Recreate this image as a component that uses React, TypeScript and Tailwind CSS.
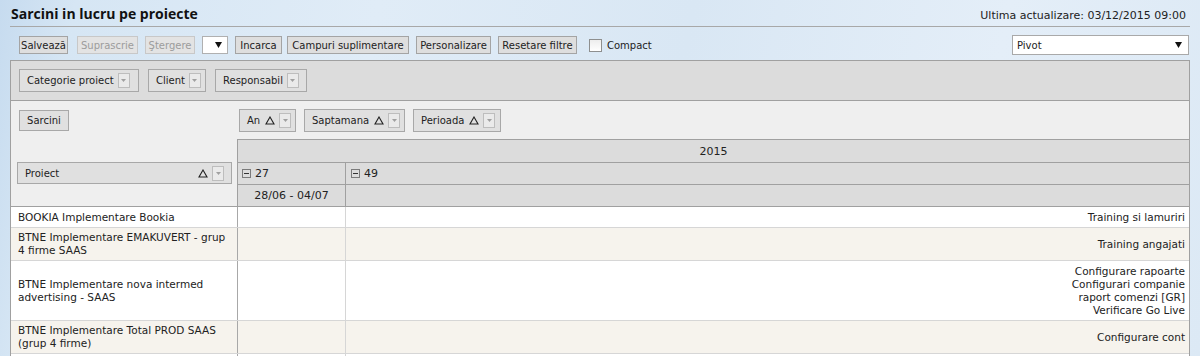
import React from "react";

const DD = () => (
  <span className="flex h-[15px] w-[12px] shrink-0 items-center justify-center border border-[#bdbdbd] bg-[#eaeaea]">
    <svg width="5" height="3" viewBox="0 0 5 3">
      <path d="M0 0h5L2.5 3z" fill="#a0a0a0" />
    </svg>
  </span>
);

const Tri = () => (
  <svg width="10" height="9" viewBox="0 0 10 9" className="shrink-0">
    <path d="M5 1 L9 8 H1 Z" fill="none" stroke="#222" strokeWidth="1.1" />
  </svg>
);

const MinusBox = () => (
  <svg width="9" height="9" viewBox="0 0 9 9" className="shrink-0">
    <rect x="0.5" y="0.5" width="8" height="8" fill="none" stroke="#7a7a7a" />
    <path d="M2 4.5h5" stroke="#333" />
  </svg>
);

function Field({ label, w, sort }: { label: string; w: number; sort?: boolean }) {
  return (
    <div
      className="flex h-[23px] items-center border border-[#a8a8a8] bg-[#e0e0e0] pl-[7px] pr-[4px]"
      style={{ width: w }}
    >
      <span className="whitespace-nowrap">{label}</span>
      {sort && (
        <span className="ml-[5px] flex">
          <Tri />
        </span>
      )}
      <span className="ml-[4px] flex">
        <DD />
      </span>
    </div>
  );
}

function Btn({ label, w, disabled, ml }: { label: string; w: number; disabled?: boolean; ml: string }) {
  return (
    <div
      className={
        "flex h-[18px] items-center justify-center whitespace-nowrap border " +
        (disabled
          ? "border-[#c8c8c8] bg-[#e3e3e3] text-[#9c9c9c] "
          : "border-[#a4a4a4] bg-[#dedede] text-[#222] ") +
        ml
      }
      style={{ width: w }}
    >
      {label}
    </div>
  );
}

const rows = [
  { h: 21, bg: "bg-white", left: ["BOOKIA Implementare Bookia"], right: ["Training si lamuriri"] },
  {
    h: 33,
    bg: "bg-[#f6f3ed]",
    left: ["BTNE Implementare EMAKUVERT - grup", "4 firme SAAS"],
    right: ["Training angajati"],
  },
  {
    h: 60,
    bg: "bg-white",
    left: ["BTNE Implementare nova intermed", "advertising - SAAS"],
    right: ["Configurare rapoarte", "Configurari companie", "raport comenzi [GR]", "Verificare Go Live"],
  },
  {
    h: 33,
    bg: "bg-[#f6f3ed]",
    left: ["BTNE Implementare Total PROD SAAS", "(grup 4 firme)"],
    right: ["Configurare cont"],
  },
  { h: 30, bg: "bg-white", left: [""], right: [""] },
];

export default function App() {
  return (
    <div className="relative h-[356px] w-[1200px] overflow-hidden bg-[linear-gradient(100deg,#c6dbef_0%,#d6e6f4_6%,#e0ecf7_30%,#d9e7f4_55%,#e4eef8_80%,#dce9f5_100%)] font-['DejaVu_Sans',sans-serif] text-[10px] leading-[13px] text-[#222]">
      {/* header */}
      <div className="flex h-[26px] items-end justify-between px-[11px] pb-[5px]">
        <div className="font-['Open_Sans',sans-serif] text-[14px] font-bold leading-none text-[#111]">
          Sarcini in lucru pe proiecte
        </div>
        <div className="pr-[3px] text-[11px] leading-none text-[#222]">Ultima actualizare: 03/12/2015 09:00</div>
      </div>
      <div className="mx-[10px] h-px bg-[#a8a8a8]" />

      {/* toolbar */}
      <div className="mt-[8px] flex h-[20px] items-center pl-[19px] pr-[11px]">
        <Btn label="Salvează" w={49} ml="" />
        <Btn label="Suprascrie" w={61} disabled ml="ml-[9px]" />
        <Btn label="Ştergere" w={50} disabled ml="ml-[7px]" />
        <div className="ml-[7px] flex h-[18px] w-[26px] items-center justify-end border border-[#b0b0b0] bg-white pr-[5px]">
          <svg width="7" height="6" viewBox="0 0 7 6">
            <path d="M0 0h7L3.5 6z" fill="#111" />
          </svg>
        </div>
        <Btn label="Incarca" w={47} ml="ml-[7px]" />
        <Btn label="Campuri suplimentare" w={122} ml="ml-[5px]" />
        <Btn label="Personalizare" w={75} ml="ml-[7px]" />
        <Btn label="Resetare filtre" w={79} ml="ml-[7px]" />
        <div className="ml-[12px] h-[13px] w-[13px] border border-[#8e8f8f] bg-[linear-gradient(#ededed,#ffffff)]" />
        <span className="ml-[5px]">Compact</span>
        <div className="ml-auto flex h-[20px] w-[177px] items-center justify-between border border-[#a9a9a9] bg-white pl-[4px] pr-[6px]">
          <span>Pivot</span>
          <svg width="7" height="6" viewBox="0 0 7 6">
            <path d="M0 0h7L3.5 6z" fill="#111" />
          </svg>
        </div>
      </div>

      {/* panel */}
      <div className="mx-[10px] mt-[5px] border border-[#a0a0a0] bg-[#efefef]">
        {/* filter area */}
        <div className="flex h-[40px] items-center gap-[9px] border-b border-[#a0a0a0] bg-[#dcdcdc] pl-[8px]">
          <Field label="Categorie proiect" w={120} />
          <Field label="Client" w={58} />
          <Field label="Responsabil" w={92} />
        </div>

        {/* header area */}
        <div className="grid grid-cols-[226px_1fr]">
          <div className="h-[38px] pl-[8px] pt-[9px]">
            <div className="flex h-[21px] w-[50px] items-center justify-center border border-[#a8a8a8] bg-[#e0e0e0]">
              Sarcini
            </div>
          </div>
          <div className="flex h-[38px] gap-[8px] pl-[2px] pt-[8px]">
            <Field label="An" w={57} sort />
            <Field label="Saptamana" w={101} sort />
            <Field label="Perioada" w={88} sort />
          </div>

          <div className="pl-[6px] pt-[23px]">
            <div className="flex h-[22px] w-[215px] items-center justify-between border border-[#a8a8a8] bg-[#e0e0e0] pl-[7px] pr-[7px]">
              <span>Proiect</span>
              <span className="flex items-center gap-[4px]">
                <Tri />
                <DD />
              </span>
            </div>
          </div>
          <div className="border-l border-t border-[#a0a0a0] bg-[#dcdcdc] text-[11px]">
            <div className="flex h-[23px] items-center justify-center border-b border-[#a0a0a0]">2015</div>
            <div className="flex h-[22px] border-b border-[#a0a0a0]">
              <div className="flex w-[108px] items-center gap-[4px] border-r border-[#a0a0a0] pl-[4px]">
                <MinusBox />
                <span>27</span>
              </div>
              <div className="flex flex-1 items-center gap-[4px] pl-[5px]">
                <MinusBox />
                <span>49</span>
              </div>
            </div>
            <div className="flex h-[21px]">
              <div className="flex w-[108px] items-center justify-center border-r border-[#a0a0a0]">28/06 - 04/07</div>
              <div className="flex-1" />
            </div>
          </div>
        </div>

        {/* data */}
        <div className="border-t border-[#a0a0a0] text-[10.5px]">
          {rows.map((r, i) => (
            <div
              key={i}
              className={"grid grid-cols-[227px_108px_1fr] border-b border-[#d6d6d6] " + r.bg}
              style={{ height: r.h }}
            >
              <div className="flex flex-col justify-center whitespace-nowrap border-r border-[#a8a8a8] pl-[7px]">
                {r.left.map((t, j) => (
                  <div key={j}>{t}</div>
                ))}
              </div>
              <div className="border-r border-[#d6d6d6]" />
              <div className="flex flex-col items-end justify-center whitespace-nowrap pr-[4px]">
                {r.right.map((t, j) => (
                  <div key={j}>{t}</div>
                ))}
              </div>
            </div>
          ))}
        </div>
      </div>
    </div>
  );
}
